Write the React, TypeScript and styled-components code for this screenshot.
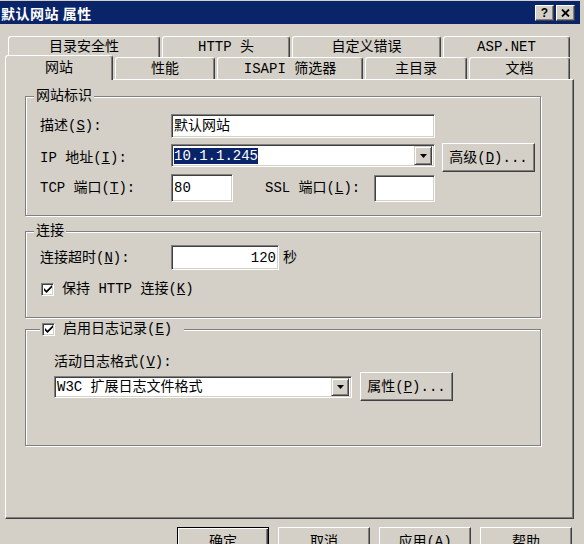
import React from 'react';
import styled, { createGlobalStyle } from 'styled-components';

const FACE = '#d4d0c8';
const SHADOW = '#808080';
const DARK = '#404040';
const NAVY = '#0a246a';
const UI_FONT = `"Liberation Mono", "Noto Sans CJK SC", monospace`;

const GlobalStyle = createGlobalStyle`
  html, body {
    margin: 0;
    padding: 0;
    background: ${FACE};
  }
  body {
    width: 584px;
    height: 544px;
    overflow: hidden;
    font-family: ${UI_FONT};
    font-size: 14px;
    line-height: 16px;
    color: #000;
  }
`;

const Window = styled.div`
  width: 584px;
  height: 544px;
  box-sizing: border-box;
  padding: 1px 4px 0 0;
  background: ${FACE};
  overflow: hidden;
`;

const TitleBar = styled.div`
  height: 23px;
  background: ${NAVY};
  display: flex;
  align-items: center;
  gap: 2px;
  padding: 0 5px 0 1px;
`;

const TitleText = styled.div`
  flex: 1;
  color: #fff;
  font-family: "Noto Sans CJK SC", sans-serif;
  font-weight: bold;
  font-size: 14px;
  letter-spacing: 0.5px;
`;

const CaptionButton = styled.div`
  box-sizing: border-box;
  width: 19px;
  height: 16px;
  background: ${FACE};
  border: 1px solid;
  border-color: #fff ${DARK} ${DARK} #fff;
  box-shadow: inset -1px -1px ${SHADOW};
  display: flex;
  align-items: center;
  justify-content: center;
  font-family: "Liberation Sans", sans-serif;
  font-weight: bold;
  font-size: 12px;
  line-height: 12px;
`;

const Body = styled.div`
  padding: 12px 0 0 5px;
`;

const TabRow = styled.div<{ $h: number; $indent: number }>`
  height: ${p => p.$h}px;
  padding-left: ${p => p.$indent}px;
  display: flex;
  align-items: flex-end;
  gap: 2px;
`;

const Tab = styled.div<{ $w: number; $active?: boolean }>`
  box-sizing: border-box;
  width: ${p => p.$w}px;
  height: ${p => (p.$active ? '25px' : '100%')};
  margin-bottom: ${p => (p.$active ? '-1px' : '0')};
  position: ${p => (p.$active ? 'relative' : 'static')};
  z-index: ${p => (p.$active ? 1 : 'auto')};
  background: ${FACE};
  border-top: 1px solid #fff;
  border-left: 1px solid #fff;
  border-right: 1px solid ${DARK};
  border-radius: 3px 3px 0 0;
  box-shadow: inset -1px 0 ${SHADOW};
  display: flex;
  align-items: center;
  justify-content: center;
  white-space: nowrap;
`;

const Panel = styled.div`
  box-sizing: border-box;
  width: 569px;
  height: 440px;
  border-top: 1px solid #fff;
  border-left: 1px solid #fff;
  border-right: 1px solid ${DARK};
  border-bottom: 1px solid ${DARK};
  box-shadow: inset -1px -1px ${SHADOW};
  padding: 16px 0 0 19px;
`;

const GroupBox = styled.div<{ $h: number; $mt: number; $pt: number; $pl: number }>`
  position: relative;
  box-sizing: border-box;
  width: 516px;
  height: ${p => p.$h}px;
  margin-top: ${p => p.$mt}px;
  padding: ${p => p.$pt}px 0 0 ${p => p.$pl}px;
  border: 1px solid ${SHADOW};
  box-shadow: inset 1px 1px #fff, 1px 1px #fff;
`;

const Legend = styled.div<{ $left: number; $pr?: number }>`
  position: absolute;
  top: -9px;
  left: ${p => p.$left}px;
  padding: 0 ${p => p.$pr ?? 2}px 0 2px;
  background: ${FACE};
  display: flex;
  align-items: center;
  gap: 8px;
  height: 16px;
`;

const Row = styled.div<{ $h: number; $mt?: number }>`
  height: ${p => p.$h}px;
  margin-top: ${p => p.$mt ?? 0}px;
  display: flex;
  align-items: center;
`;

const Label = styled.span<{ $w?: number; $ml?: number }>`
  width: ${p => (p.$w ? `${p.$w}px` : 'auto')};
  margin-left: ${p => p.$ml ?? 0}px;
  white-space: nowrap;
  flex-shrink: 0;
`;

const Field = styled.div<{ $w: number; $h: number; $right?: boolean; $top?: boolean }>`
  box-sizing: border-box;
  width: ${p => p.$w}px;
  height: ${p => p.$h}px;
  align-self: ${p => (p.$top ? 'flex-start' : 'center')};
  margin-top: ${p => (p.$top ? '1px' : '0')};
  background: #fff;
  border: 1px solid;
  border-color: ${SHADOW} #fff #fff ${SHADOW};
  box-shadow: inset 1px 1px ${DARK}, inset -1px -1px ${FACE};
  padding: 1px 2px 1px 1px;
  display: flex;
  align-items: center;
  justify-content: ${p => (p.$right ? 'flex-end' : 'flex-start')};
  white-space: nowrap;
  flex-shrink: 0;
`;

const FieldText = styled.span`
  flex: 1;
  padding-left: 1px;
`;

const Selected = styled.span`
  background: ${NAVY};
  color: #fff;
`;

const DropButton = styled.div`
  box-sizing: border-box;
  width: 18px;
  height: 100%;
  background: ${FACE};
  border: 1px solid;
  border-color: ${FACE} ${DARK} ${DARK} ${FACE};
  box-shadow: inset 1px 1px #fff, inset -1px -1px ${SHADOW};
  display: flex;
  align-items: center;
  justify-content: center;
`;

const Button = styled.div<{ $w: number; $ml?: number; $default?: boolean }>`
  box-sizing: border-box;
  width: ${p => p.$w}px;
  height: 29px;
  margin-left: ${p => p.$ml ?? 0}px;
  background: ${FACE};
  border: 1px solid;
  border-color: ${p => (p.$default ? '#000' : `#fff ${DARK} ${DARK} #fff`)};
  box-shadow: ${p =>
    p.$default
      ? `inset 1px 1px #fff, inset -1px -1px ${DARK}, inset -2px -2px ${SHADOW}`
      : `inset -1px -1px ${SHADOW}`};
  display: flex;
  align-items: center;
  justify-content: center;
  white-space: nowrap;
  flex-shrink: 0;
`;

const CheckRow = styled.div<{ $mt?: number; $pl?: number }>`
  display: flex;
  align-items: center;
  gap: 8px;
  margin-top: ${p => p.$mt ?? 0}px;
  padding-left: ${p => p.$pl ?? 0}px;
  height: 16px;
`;

const CheckBox = styled.span`
  box-sizing: border-box;
  width: 13px;
  height: 13px;
  background: #fff;
  border: 1px solid;
  border-color: ${SHADOW} #fff #fff ${SHADOW};
  box-shadow: inset 1px 1px ${DARK}, inset -1px -1px ${FACE};
  display: flex;
  align-items: center;
  justify-content: center;
  flex-shrink: 0;
`;

const Footer = styled.div`
  margin-top: 8px;
  padding-right: 8px;
  display: flex;
  justify-content: flex-end;
  gap: 9px;
`;

const Arrow = () => (
  <svg width="7" height="4" viewBox="0 0 7 4">
    <polygon points="0,0 7,0 3.5,4" fill="#000" />
  </svg>
);

const Check = () => (
  <svg width="8" height="8" viewBox="0 0 8 8">
    <polygon points="0,3 2.5,5.5 8,0 8,2.5 2.5,8 0,5.5" fill="#000" />
  </svg>
);

const Combo = ({ w, h, top, children }: { w: number; h: number; top?: boolean; children: React.ReactNode }) => (
  <Field $w={w} $h={h} $top={top}>
    <FieldText>{children}</FieldText>
    <DropButton>
      <Arrow />
    </DropButton>
  </Field>
);

export default function App() {
  return (
    <>
      <GlobalStyle />
      <Window>
        <TitleBar>
          <TitleText>默认网站 属性</TitleText>
          <CaptionButton>?</CaptionButton>
          <CaptionButton>
            <svg width="9" height="8" viewBox="0 0 9 8">
              <path d="M1 0.5 L8 7.5 M8 0.5 L1 7.5" stroke="#000" strokeWidth="1.8" />
            </svg>
          </CaptionButton>
        </TitleBar>

        <Body>
          <TabRow $h={21} $indent={3}>
            <Tab $w={152}>目录安全性</Tab>
            <Tab $w={128}>HTTP 头</Tab>
            <Tab $w={149}>自定义错误</Tab>
            <Tab $w={127}>ASP.NET</Tab>
          </TabRow>
          <TabRow $h={22} $indent={0}>
            <Tab $w={108} $active>网站</Tab>
            <Tab $w={100}>性能</Tab>
            <Tab $w={146}>ISAPI 筛选器</Tab>
            <Tab $w={102}>主目录</Tab>
            <Tab $w={101}>文档</Tab>
          </TabRow>

          <Panel>
            <GroupBox $h={120} $mt={0} $pt={17} $pl={14}>
              <Legend $left={8}>网站标识</Legend>
              <Row $h={24}>
                <Label $w={131}>描述(<u>S</u>):</Label>
                <Field $w={264} $h={24}>
                  <FieldText>默认网站</FieldText>
                </Field>
              </Row>
              <Row $h={29} $mt={5}>
                <Label $w={131}>IP 地址(<u>I</u>):</Label>
                <Combo w={264} h={23} top>
                  <Selected>10.1.1.245</Selected>
                </Combo>
                <Button $w={93} $ml={7}>高级(<u>D</u>)...</Button>
              </Row>
              <Row $h={28} $mt={2}>
                <Label $w={131}>TCP 端口(<u>T</u>):</Label>
                <Field $w={62} $h={28}>
                  <FieldText>80</FieldText>
                </Field>
                <Label $w={109} $ml={32}>SSL 端口(<u>L</u>):</Label>
                <Field $w={61} $h={27} />
              </Row>
            </GroupBox>

            <GroupBox $h={87} $mt={15} $pt={13} $pl={14}>
              <Legend $left={8}>连接</Legend>
              <Row $h={25}>
                <Label $w={131}>连接超时(<u>N</u>):</Label>
                <Field $w={108} $h={25} $right>
                  120
                </Field>
                <Label $ml={4}>秒</Label>
              </Row>
              <CheckRow $mt={11} $pl={1}>
                <CheckBox>
                  <Check />
                </CheckBox>
                <span>保持 HTTP 连接(<u>K</u>)</span>
              </CheckRow>
            </GroupBox>

            <GroupBox $h={117} $mt={11} $pt={24} $pl={28}>
              <Legend $left={14} $pr={12}>
                <CheckBox>
                  <Check />
                </CheckBox>
                <span>启用日志记录(<u>E</u>)</span>
              </Legend>
              <Row $h={16}>
                <Label>活动日志格式(<u>V</u>):</Label>
              </Row>
              <Row $h={29} $mt={2}>
                <Combo w={298} h={22}>
                  W3C 扩展日志文件格式
                </Combo>
                <Button $w={93} $ml={8}>属性(<u>P</u>)...</Button>
              </Row>
            </GroupBox>
          </Panel>

          <Footer>
            <Button $w={92} $default>确定</Button>
            <Button $w={92}>取消</Button>
            <Button $w={92}>应用(<u>A</u>)</Button>
            <Button $w={92}>帮助</Button>
          </Footer>
        </Body>
      </Window>
    </>
  );
}
